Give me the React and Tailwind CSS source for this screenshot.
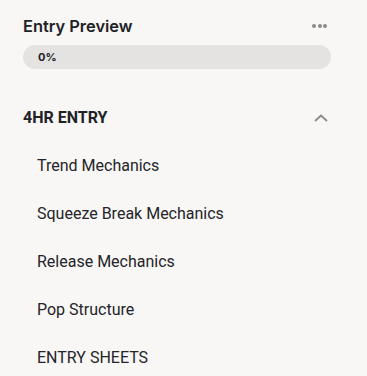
const ITEMS = ['Trend Mechanics', 'Squeeze Break Mechanics', 'Release Mechanics', 'Pop Structure', 'ENTRY SHEETS']

export default function App() {
  return (
    <div className="min-h-[376px] w-full bg-[#f8f7f5] pl-[23px] pr-[36px] pt-[14px] font-['Roboto',sans-serif] text-[#1f1f24]">
      <div className="flex items-center justify-between">
        <h2 className="font-['Inter',sans-serif] text-[16.4px] font-semibold leading-[24px] text-[#222226]">
          Entry Preview
        </h2>
        <button type="button" className="mr-[4px] flex items-center gap-[1.5px] text-[#8a8a8a]">
          <span className="h-[4px] w-[4px] rounded-full bg-current" />
          <span className="h-[4px] w-[4px] rounded-full bg-current" />
          <span className="h-[4px] w-[4px] rounded-full bg-current" />
        </button>
      </div>
      <div className="mt-[7px] flex h-[24px] w-full items-center rounded-full bg-[#e4e3e2] px-[15px]">
        <span className="font-['Inter',sans-serif] text-[11px] font-bold text-[#222226]">0%</span>
      </div>

      <div className="mt-[38.5px] flex h-[20px] items-center justify-between">
        <span className="text-[16px] font-bold leading-[20px] text-[#222226]">4HR ENTRY</span>
        <svg width="14" height="8" viewBox="0 0 14 8" className="mr-[3px] text-[#8a8a8a]">
          <path d="M1 7 L7 1.5 L13 7" fill="none" stroke="currentColor" strokeWidth="1.8" />
        </svg>
      </div>

      <ul className="mt-[26px] flex flex-col gap-[24px] pl-[14px]">
        {ITEMS.map((item) => (
          <li key={item} className="text-[16px] leading-[24px] text-[#24242a]">
            {item}
          </li>
        ))}
      </ul>
    </div>
  )
}
